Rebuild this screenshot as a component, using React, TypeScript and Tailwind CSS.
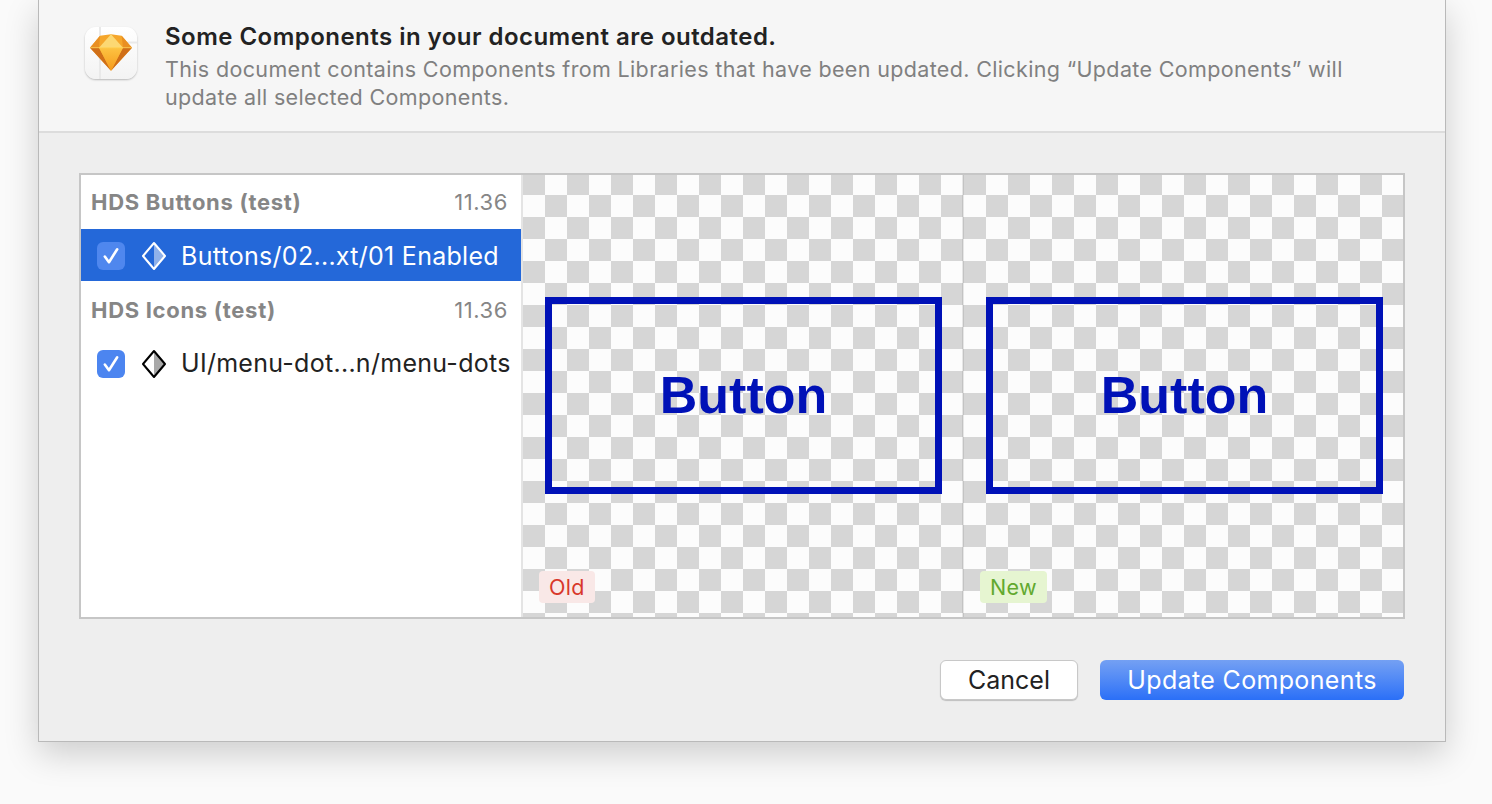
import React from "react";

const font = { fontFamily: "Inter, 'Liberation Sans', sans-serif" };

const SketchIcon = () => (
  <svg className="flex-none rounded-[11px] shadow-[0_1px_2px_rgba(0,0,0,0.25)]" width="52" height="52" viewBox="0 0 52 52" fill="none" xmlns="http://www.w3.org/2000/svg">
    <defs>
      <linearGradient id="tile" x1="0" y1="0" x2="0" y2="1">
        <stop offset="0" stopColor="#ffffff" />
        <stop offset="1" stopColor="#f3f3f3" />
      </linearGradient>
      <linearGradient id="mid" x1="0" y1="0" x2="0" y2="1">
        <stop offset="0" stopColor="#fdc342" />
        <stop offset="1" stopColor="#f59b1c" />
      </linearGradient>
    </defs>
    <rect width="52" height="52" fill="url(#tile)" />
    <path d="M15 0V52" stroke="#e9e9e9" strokeWidth="2" />
    <path d="M42 15.5H52" stroke="#e9e9e9" strokeWidth="2" />
    <path d="M15 8.7L26 7.3L36.7 8.7L47 20.7L26 43.7L5 20.7L15 8.7Z" fill="#f5a62b" />
    <path d="M5 20.7L15 8.7L14 20.7H5Z" fill="#e98f22" />
    <path d="M47 20.7L36.7 8.7L38 20.7H47Z" fill="#e98f22" />
    <path d="M14 20.7L26 7.3L38 20.7H14Z" fill="#fcd873" />
    <path d="M5 20.7H14L26 43.7L5 20.7Z" fill="#d06f18" />
    <path d="M47 20.7H38L26 43.7L47 20.7Z" fill="#d06f18" />
    <path d="M14 20.7H38L26 43.7L14 20.7Z" fill="url(#mid)" />
    <path d="M5.5 20.7H46.5" stroke="#ffd75e" strokeWidth="0.8" />
  </svg>
);

const Check = ({ bg }: { bg: string }) => (
  <div className={`flex h-7 w-7 flex-none items-center justify-center rounded-[6px] ${bg}`}>
    <svg width="18" height="18" viewBox="0 0 16 16" fill="none" xmlns="http://www.w3.org/2000/svg">
      <path d="M2.5 8.5L6.2 13.5L13.5 2" stroke="white" strokeWidth="2.3" strokeLinecap="round" strokeLinejoin="round" />
    </svg>
  </div>
);

const Diamond = ({ stroke, half }: { stroke: string; half: string }) => (
  <svg className="ml-4 flex-none" width="26" height="30" viewBox="0 0 26 30" fill="none" xmlns="http://www.w3.org/2000/svg">
    <path d="M13 2L24 15L13 28V2Z" fill={half} />
    <path d="M13 2L24 15L13 28L2 15L13 2Z" stroke={stroke} strokeWidth="2" strokeLinejoin="round" />
  </svg>
);

const GroupHeader = ({ name, className }: { name: string; className: string }) => (
  <div className={`flex items-center justify-between pl-[10px] pr-[13px] text-[22px] text-[#868686] ${className}`}>
    <span className="font-bold tracking-[0.7px]">{name}</span>
    <span className="tracking-[0.6px]">11.36</span>
  </div>
);

const Preview = ({
  label,
  labelClass,
  divider,
}: {
  label: string;
  labelClass: string;
  divider?: boolean;
}) => (
  <div
    className={`relative flex h-full items-center bg-[conic-gradient(#fcfcfc_25%,#d6d6d6_0_50%,#fcfcfc_0_75%,#d6d6d6_0)] bg-[length:44px_44px] bg-[position:0_-2px] pl-[22px] ${
      divider ? "w-[441px] flex-none border-r-2 border-[#00000016]" : "flex-1"
    }`}
  >
    <div
      className="mb-px flex h-[197px] w-[397px] items-center justify-center border-[7px] border-[#0011b7] pb-[2px] text-[52px] font-bold text-[#0011b7]"
      style={{ fontFamily: "'Liberation Sans', Arial, sans-serif" }}
    >
      Button
    </div>
    <span
      className={`absolute bottom-[14px] left-4 flex h-8 items-center rounded-[4px] px-[10px] text-[21.5px] tracking-[0.3px] ${labelClass}`}
    >
      {label}
    </span>
  </div>
);

export default function App() {
  return (
    <div className="h-[804px] w-full overflow-hidden bg-[#fafafa] pl-[38px]" style={font}>
      <div className="flex h-[742px] w-[1408px] flex-col border-x border-b border-[#b9b9b9] bg-[#eeeeee] shadow-[0_12px_32px_rgba(0,0,0,0.18)]">
        {/* Header */}
        <div className="flex h-[133px] flex-none gap-7 border-b-2 border-[#dcdcdc] bg-[#f6f6f6] pl-[46px] pt-[27px]">
          <SketchIcon />
          <div className="-mt-[6px]">
            <p className="text-[24px] font-semibold leading-[32px] tracking-[0.47px] text-[#222222]">
              Some Components in your document are outdated.
            </p>
            <p className="mt-[2px] w-[1200px] text-[21.5px] leading-[28px] tracking-[0.35px] text-[#808080]">
              This document contains Components from Libraries that have been updated. Clicking “Update Components” will update all selected Components.
            </p>
          </div>
        </div>

        {/* Body */}
        <div className="flex flex-1 flex-col px-10 pt-10">
          <div className="flex h-[446px] border-2 border-[#c6c6c6]">
            <div className="h-full w-[442px] flex-none border-r-2 border-[#e4e4e4] bg-white">
              <GroupHeader name="HDS Buttons (test)" className="h-[54px]" />
              <div className="flex h-[52px] items-center bg-[#2468d9] pl-4 pt-[2px] text-[25px] text-white">
                <Check bg="bg-[#4f87ee]" />
                <Diamond stroke="#ffffff" half="#8fb1ea" />
                <span className="ml-[14px] mt-px whitespace-nowrap tracking-[0.28px]">Buttons/02...xt/01 Enabled</span>
              </div>
              <GroupHeader name="HDS Icons (test)" className="h-[56px] pt-[2px]" />
              <div className="flex h-[52px] items-center pl-4 pt-[2px] text-[25px] text-[#222222]">
                <Check bg="bg-[#4c85f0]" />
                <Diamond stroke="#000000" half="#a8a8a8" />
                <span className="ml-[14px] whitespace-nowrap tracking-[0.28px]">UI/menu-dot...n/menu-dots</span>
              </div>
            </div>
            <div className="flex h-full flex-1">
              <Preview label="Old" labelClass="bg-[#f9e8e7] text-[#d8382b]" divider />
              <Preview label="New" labelClass="bg-[#e6f5d1] text-[#62a92f]" />
            </div>
          </div>

          {/* Actions */}
          <div className="mt-[41px] flex justify-end gap-[22px] pr-px">
            <button className="h-10 w-[138px] rounded-[6px] border border-[#c8c8c8] bg-white pt-px text-[25px] text-[#222222] shadow-[0_1px_1px_rgba(0,0,0,0.2)]">
              Cancel
            </button>
            <button className="h-10 w-[304px] rounded-[6px] bg-gradient-to-b from-[#74a0f3] to-[#2a6ff7] pt-px text-[25px] tracking-[0.35px] text-white">
              Update Components
            </button>
          </div>
        </div>
      </div>
    </div>
  );
}
